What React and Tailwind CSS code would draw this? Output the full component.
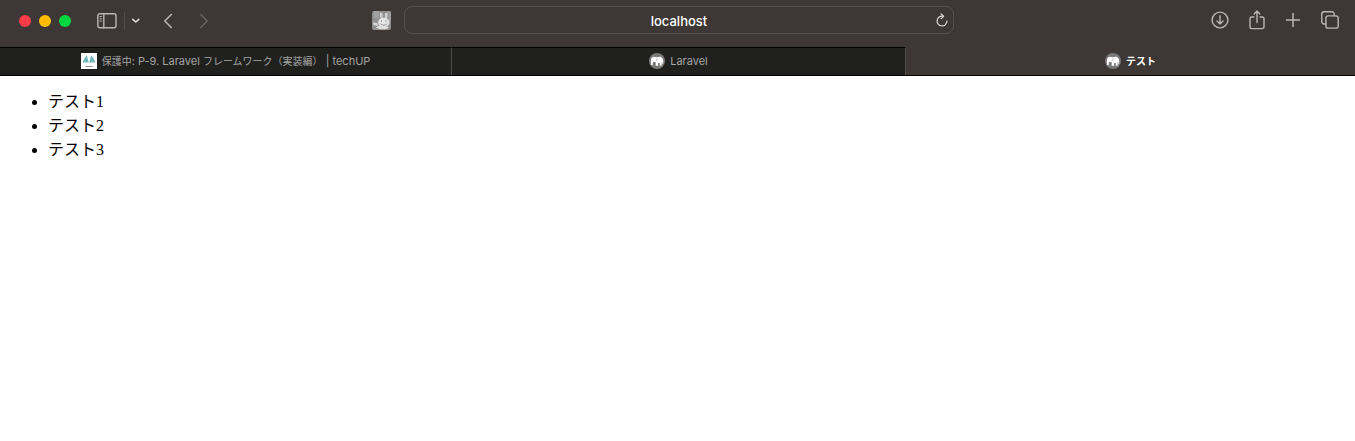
import React from "react";

const line = {
  fill: "none",
  stroke: "currentColor",
  strokeLinecap: "round",
  strokeLinejoin: "round",
};

function SidebarIcon() {
  return (
    <svg width="20" height="16" viewBox="0 0 20 16" {...line} strokeWidth="1.4">
      <rect x="0.8" y="0.8" width="18.2" height="14" rx="2" />
      <path d="M6.8 1v14" />
      <path d="M2.9 3.5h1.6M2.9 5.8h1.6M2.9 8.1h1.6" strokeWidth="1" />
    </svg>
  );
}

function ReloadIcon() {
  return (
    <svg width="12" height="14" viewBox="0 0 12 14" {...line} strokeWidth="1.2">
      <path d="M6.6 3.2A4.9 4.9 0 1 0 10.9 8" />
      <path d="M5 0.9l2.6 2.4L5.2 5.7" />
    </svg>
  );
}

function DownloadIcon() {
  return (
    <svg width="18" height="18" viewBox="0 0 18 18" {...line} strokeWidth="1.4">
      <circle cx="9" cy="9" r="7.9" />
      <path d="M9 4.8v8M6 10l3 3 3-3" />
    </svg>
  );
}

function ShareIcon() {
  return (
    <svg width="16" height="20" viewBox="0 0 16 20" {...line} strokeWidth="1.4">
      <path d="M5 7H2.8A1.8 1.8 0 0 0 1 8.8v8a1.8 1.8 0 0 0 1.8 1.8h10.4a1.8 1.8 0 0 0 1.8-1.8v-8A1.8 1.8 0 0 0 13.2 7H11" />
      <path d="M8 12.5V1.2M5.2 3.9L8 1.1l2.8 2.8" />
    </svg>
  );
}

function TabsIcon() {
  return (
    <svg width="18" height="18" viewBox="0 0 18 18" {...line} strokeWidth="1.4">
      <rect x="4.9" y="4.9" width="12.3" height="12.2" rx="2.2" />
      <path d="M4.8 13H3a2.2 2.2 0 0 1-2.2-2.2V3A2.2 2.2 0 0 1 3 .8h8A2.2 2.2 0 0 1 13.2 3v1.8" />
    </svg>
  );
}

function RabbitIcon() {
  return (
    <svg width="19" height="19" viewBox="0 0 19 19">
      <rect width="19" height="19" rx="2" fill="#929192" />
      <path d="M2 0h5v7H2zM16.5 0H17a2 2 0 0 1 2 2v8h-2.5z" fill="#a3a2a3" />
      <path d="M.8 11.5l4.500.5.5 3-4-1z" fill="#dcdcdc" />
      <path d="M8 2.3c1.2-.8 2.5 0 2.5 1.500V8H8.600zM13 3.800c0-1.500 1.400-2.300 2.500-1.500L15 8h-2z" fill="#e8e8e8" />
      <path d="M9.3 3.5l.3 3.5M14.2 3.5L14 7" stroke="#a9a8a9" strokeWidth=".7" />
      <ellipse cx="11.8" cy="11.5" rx="5.7" ry="4.7" fill="#e6e6e6" />
      <path d="M4 16.5c2-2 5-2.5 8-2 2.500 0 4 1 4.500 2.500-1.500 1.500-10 2-12.500-.5z" fill="#dfdfdf" />
      <path d="M9.5 9.300v1.400M13.900 9.300v1.400" stroke="#858485" strokeWidth="1" />
      <path d="M8.5 12.700l1.700 1.300h3.200l1.800-1.300" fill="none" stroke="#8f8e8f" strokeWidth=".9" />
    </svg>
  );
}

function TechUpIcon() {
  return (
    <svg width="16" height="16" viewBox="0 0 16 16" className="shrink-0">
      <rect width="16" height="16" fill="#fff" />
      <path d="M5.8 2.2L7.800 9.600H1.600L3.400 5.600zM10.200 2.200l2.400 3.400 1.800 4H8.200z" fill="#71b8bb" />
      <path d="M4.5 13.500h7" stroke="#8a9092" strokeWidth="1" />
    </svg>
  );
}

function ElephantIcon() {
  return (
    <svg width="16" height="16" viewBox="0 0 16 16" className="shrink-0">
      <circle cx="8" cy="8" r="8" fill="#7b7a7a" />
      <path
        d="M1.900 11.300V7.500C1.900 5.100 3.300 3.700 5.300 3.700c1 0 1.600.4 2.500.3 1.200-.2 2.200-.6 3.500-.2 1.900.6 2.900 2.400 2.900 4.700V11h-.8V9l-.7.5v3.300h-1.900v-2.900H9.100v2.900H6.700V9.300L4.400 8.800c-.6.900-.7 1.700-.7 3.300-1.100.2-1.700-.1-1.800-.8z"
        fill="#fff"
      />
      <path d="M7.600 4.600c.7 1.300.6 2.700-.5 3.700" fill="none" stroke="#8d8c8c" strokeWidth=".6" />
    </svg>
  );
}

function IconButton({ label, className = "", children, ...rest }) {
  return (
    <button type="button" aria-label={label} className={`flex shrink-0 items-center justify-center ${className}`} {...rest}>
      {children}
    </button>
  );
}

function Toolbar() {
  return (
    <header className="grid grid-cols-[1fr_minmax(200px,550px)_1fr] items-center pt-1.5 pb-[13px] pl-[3px] text-[#bab6b5]">
      <div className="flex h-7 items-center pt-px pr-[13px] pl-4">
        <div className="flex gap-2">
          <IconButton label="閉じる" className="size-3 rounded-full bg-[#ff3b47]" />
          <IconButton label="しまう" className="size-3 rounded-full bg-[#ffbc00]" />
          <IconButton label="拡大" className="size-3 rounded-full bg-[#00d840]" />
        </div>
        <IconButton label="サイドバー" className="ml-[26px]">
          <SidebarIcon />
        </IconButton>
        <div className="ml-[7px] h-[18px] w-px bg-[#514b4a]" />
        <IconButton label="タブグループ" className="ml-1.5 text-[#dedad9]">
          <svg width="10" height="6" viewBox="0 0 10 6" {...line} strokeWidth="1.6">
            <path d="M1.8 1.3L4.8 4l3-2.7" />
          </svg>
        </IconButton>
        <IconButton label="戻る" className="ml-[22px]">
          <svg width="10" height="16" viewBox="0 0 10 16" {...line} strokeWidth="1.6">
            <path d="M8.3 1.5L1.8 8l6.5 6.5" />
          </svg>
        </IconButton>
        <IconButton label="進む" className="ml-[26px] text-[#676160]" disabled>
          <svg width="10" height="16" viewBox="0 0 10 16" {...line} strokeWidth="1.5">
            <path d="M1.7 1.5L8.2 8l-6.5 6.5" />
          </svg>
        </IconButton>
        <IconButton label="拡張機能" className="ml-auto">
          <RabbitIcon />
        </IconButton>
      </div>
      <div className="relative">
        <input
          aria-label="アドレス"
          defaultValue="localhost"
          className="h-7 w-full rounded-lg border border-[#544e4d] bg-transparent pt-0.5 text-center font-['Inter','Liberation_Sans',sans-serif] text-[13px] font-medium text-white outline-none"
        />
        <IconButton label="再読み込み" className="absolute inset-y-0 right-1.5 text-[#dedad9]">
          <ReloadIcon />
        </IconButton>
      </div>
      <div className="flex h-7 items-center justify-end gap-5 pr-4">
        <IconButton label="ダウンロード">
          <DownloadIcon />
        </IconButton>
        <IconButton label="共有">
          <ShareIcon />
        </IconButton>
        <IconButton label="新規タブ">
          <svg width="16" height="16" viewBox="0 0 16 16" {...line} strokeWidth="1.5">
            <path d="M8 1.5v13M1.5 8h13" />
          </svg>
        </IconButton>
        <IconButton label="タブの概要">
          <TabsIcon />
        </IconButton>
      </div>
    </header>
  );
}

function Ja({ children }) {
  return (
    <span lang="ja" className="text-[10px]">
      {children}
    </span>
  );
}

const tabs = [
  {
    id: "techup",
    title: (
      <>
        <Ja>保護中</Ja>: P-9. <span className="mr-[3px]">Laravel</span>
        <Ja>フレームワーク（実装編）</Ja> | techUP
      </>
    ),
    Icon: TechUpIcon,
  },
  { id: "laravel", title: "Laravel", Icon: ElephantIcon },
  { id: "test", title: <Ja>テスト</Ja>, Icon: ElephantIcon, active: true },
];

function TabBar() {
  return (
    <nav className="grid grid-cols-[452fr_454fr_449fr] border-b border-black font-['Inter','Noto_Sans_CJK_JP',sans-serif] text-[11px]">
      {tabs.map(({ id, title, Icon, active }) => (
        <a
          key={id}
          href="#"
          aria-current={active ? "page" : undefined}
          className={`flex h-7 min-w-0 items-center justify-center gap-[5px] border-t pb-px ${
            active ? "border-transparent font-bold text-white" : "border-t-black border-r border-r-[#514d4c] bg-[#20201e] text-[#a4a4a2]"
          }`}
        >
          <Icon />
          <span className="truncate">{title}</span>
        </a>
      ))}
    </nav>
  );
}

export default function App() {
  return (
    <div className="min-h-screen bg-white">
      <div className="bg-[#3d3736]">
        <Toolbar />
        <TabBar />
      </div>
      <main className="px-2 py-3.5">
        <ul className="list-disc pl-10 font-['Liberation_Serif','Noto_Sans_CJK_JP',serif] text-base leading-6 text-black">
          <li>テスト1</li>
          <li>テスト2</li>
          <li>テスト3</li>
        </ul>
      </main>
    </div>
  );
}
